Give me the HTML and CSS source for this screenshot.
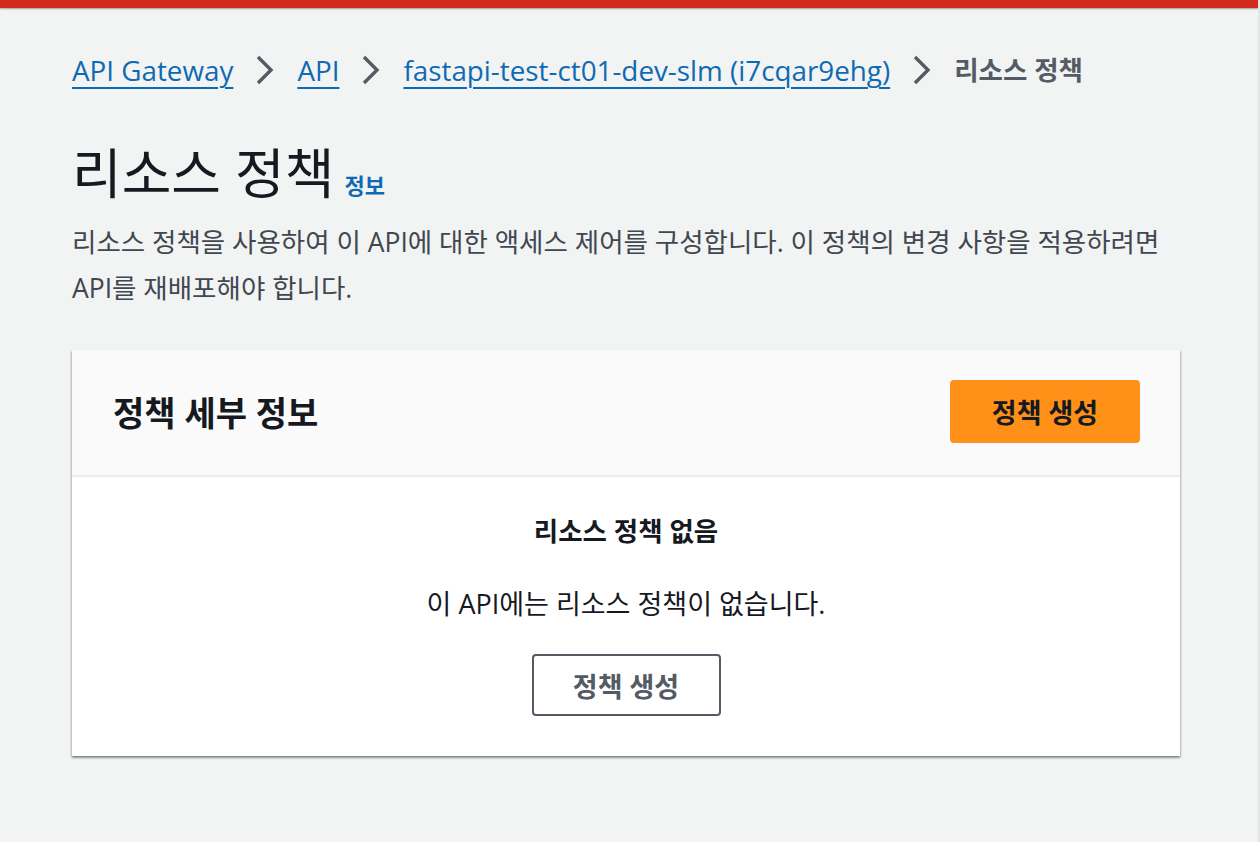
FILE: index.html
```html
<!DOCTYPE html>
<html lang="ko">
<head>
<meta charset="utf-8">
<title>리소스 정책</title>
<link rel="stylesheet" href="styles.css">
</head>
<body>
<div class="topbar"></div>
<main class="page">
  <nav class="crumbs">
    <a class="crumb-link" href="#">API Gateway</a>
    <svg class="chev" viewBox="0 0 18 30" width="18" height="30"><path d="M2 2 L15 15 L2 28" fill="none" stroke="#545b64" stroke-width="3.4"/></svg>
    <a class="crumb-link" href="#">API</a>
    <svg class="chev" viewBox="0 0 18 30" width="18" height="30"><path d="M2 2 L15 15 L2 28" fill="none" stroke="#545b64" stroke-width="3.4"/></svg>
    <a class="crumb-link" href="#">fastapi-test-ct01-dev-slm (i7cqar9ehg)</a>
    <svg class="chev" viewBox="0 0 18 30" width="18" height="30"><path d="M2 2 L15 15 L2 28" fill="none" stroke="#545b64" stroke-width="3.4"/></svg>
    <span class="crumb-current">리소스 정책</span>
  </nav>

  <div class="page-head">
    <h1 class="title">리소스 정책</h1>
    <a class="info" href="#">정보</a>
  </div>
  <p class="desc">리소스 정책을 사용하여 이 API에 대한 액세스 제어를 구성합니다. 이 정책의 변경 사항을 적용하려면 API를 재배포해야 합니다.</p>

  <section class="card">
    <div class="card-head">
      <h2 class="card-title">정책 세부 정보</h2>
      <button class="btn-primary">정책 생성</button>
    </div>
    <div class="card-body">
      <p class="empty-title">리소스 정책 없음</p>
      <p class="empty-text">이 API에는 리소스 정책이 없습니다.</p>
      <button class="btn-normal">정책 생성</button>
    </div>
  </section>
</main>
</body>
</html>
```

FILE: styles.css
```css
* { box-sizing: border-box; }
html, body { margin: 0; padding: 0; }
body {
  background: #f2f3f3;
  font-family: "Open Sans", "Noto Sans CJK KR", sans-serif;
  color: #16191f;
  min-height: 842px;
  border-right: 2px solid #e3e5e5;
  word-break: keep-all;
}
.topbar {
  height: 8px;
  background: #d22a1b;
  box-shadow: 0 1px 2px rgba(0, 0, 0, 0.35);
}
.page {
  padding: 44px 78px 0 72px;
}
.crumbs {
  display: flex;
  align-items: center;
  height: 36px;
  font-size: 27.8px;
  line-height: 36px;
}
.crumb-link {
  color: #0f6ab4;
  text-decoration: underline;
  text-decoration-thickness: 2px;
  text-underline-offset: 6px;
}
.chev {
  margin: 0 23px 0 23px;
  flex: none;
}
.crumb-current {
  color: #545b64;
  font-weight: 700;
  font-size: 26.5px;
}
.page-head {
  display: flex;
  align-items: baseline;
  margin-top: 54px;
  gap: 10px;
}
.title {
  margin: 0;
  font-size: 54px;
  font-weight: 400;
  line-height: 62px;
}
.info {
  color: #0f6ab4;
  font-size: 22px;
  font-weight: 700;
  text-decoration: none;
}
.desc {
  margin: 15px 0 0;
  font-size: 26.5px;
  line-height: 46px;
  color: #414750;
}
.card {
  margin-top: 39px;
  background: #fff;
  box-shadow: 0 2px 2px rgba(0, 28, 36, 0.35), 1px 1px 2px rgba(0, 28, 36, 0.15), -1px 1px 2px rgba(0, 28, 36, 0.15);
}
.card-head {
  display: flex;
  align-items: center;
  justify-content: space-between;
  background: #fafafa;
  border-bottom: 2px solid #eaeded;
  padding: 30px 40px 32px 41px;
}
.card-title {
  margin: 0;
  font-size: 34px;
  font-weight: 700;
}
.btn-primary {
  height: 63px;
  width: 190px;
  background: #ff9018;
  border: none;
  border-radius: 4px;
  font-family: inherit;
  font-size: 27px;
  font-weight: 700;
  color: #16191f;
}
.card-body {
  display: flex;
  flex-direction: column;
  align-items: center;
  padding: 36px 0 40px;
}
.empty-title {
  margin: 0;
  font-size: 26.5px;
  font-weight: 700;
  line-height: 36px;
}
.empty-text {
  margin: 37px 0 0;
  font-size: 27px;
  line-height: 36px;
}
.btn-normal {
  margin-top: 32px;
  height: 62px;
  width: 189px;
  background: #fff;
  border: 2px solid #545b64;
  border-radius: 4px;
  font-family: inherit;
  font-size: 27px;
  font-weight: 700;
  color: #545b64;
}
```
